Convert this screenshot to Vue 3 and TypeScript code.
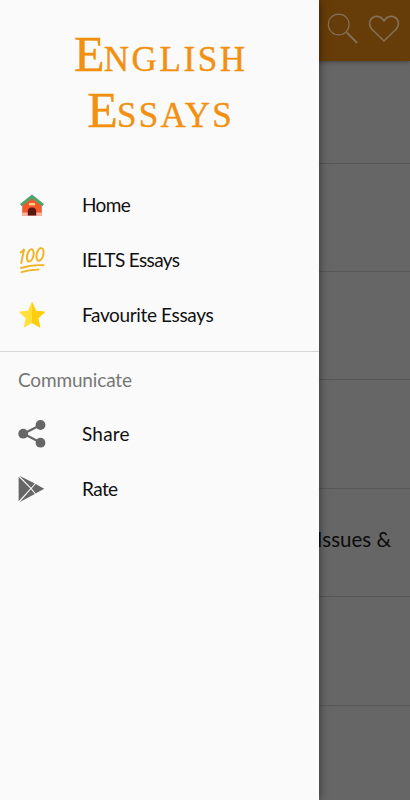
<script setup lang="ts">
interface Entry {
  id: string
  label: string
}

const mainEntries: Entry[] = [
  { id: 'home', label: 'Home' },
  { id: 'ielts', label: 'IELTS Essays' },
  { id: 'favourite', label: 'Favourite Essays' },
]
const communicateEntries: Entry[] = [
  { id: 'share', label: 'Share' },
  { id: 'rate', label: 'Rate' },
]
const topics: string[] = ['', '', '', '', 'Issues &', '', '']
</script>

<template>
  <div class="screen">
    <div class="page">
      <header class="appbar">
        <svg class="search" viewBox="0 0 32 32">
          <circle cx="11.7" cy="11.5" r="10.4" />
          <path class="handle" d="M19.3 19.2L30.2 30" />
        </svg>
        <svg class="heart" viewBox="0 0 32 28">
          <path d="M16 26L3.9 14.2C-.6 9.3 2 1.7 8.5 1.4c3.4-.1 5.8 1.8 7.5 4.5 1.7-2.7 4.1-4.6 7.5-4.5 6.5.3 9.1 7.9 4.6 12.8Z" />
        </svg>
      </header>
      <div v-for="(topic, i) in topics" :key="i" class="topic">{{ topic }}</div>
    </div>

    <aside class="drawer">
      <h1 class="title">
        <span class="wide"><span class="initial">E</span>nglish</span><br />
        <span class="narrow"><span class="initial">E</span>ssays</span>
      </h1>
      <nav class="menu">
        <a v-for="e in mainEntries" :key="e.id" class="entry">
          <svg v-if="e.id === 'home'" class="icon" viewBox="0 0 28 28">
            <path fill="#f15a2b" d="M4.2 12L14 4.5l9.8 7.5v12.5H4.2z" />
            <path fill="#f8b5a3" d="M4.2 21.5h19.6v3H4.2z" />
            <path fill="#5d1712" d="M9.8 24.5v-4.3a4.2 3.8 0 0 1 8.4 0v4.3z" />
            <rect x="11" y="12" width="6" height="2.4" fill="#ffcc80" />
            <path fill="#4fa36b" d="M14 3.6L26 13l-1.6 2.2L14 7.7 3.6 15.2 2 13z" />
          </svg>
          <svg v-else-if="e.id === 'ielts'" class="icon hundred" viewBox="0 0 28 28">
            <path d="M2.8 6.4Q5 5.2 6.2 3L3.2 17" />
            <ellipse cx="12.3" cy="9.4" rx="3.1" ry="6.3" transform="rotate(14 12.3 9.4)" />
            <ellipse cx="22" cy="8.4" rx="3.3" ry="6.5" transform="rotate(14 22 8.4)" />
            <path d="M3 22Q13 18.6 25.5 19.2M3.5 26.2Q11 23.4 20.5 23.6" />
          </svg>
          <svg v-else class="icon" viewBox="0 0 28 28">
            <path fill="#ffdf38" d="M14 .8l4 9 9.3 1-7 6.4 2 9.6L14 22 5.7 26.8l2-9.6-7-6.4 9.3-1z" />
            <path fill="#fdce0c" d="M14 .8l4 9 9.3 1-7 6.4 2 9.6L14 22z" />
          </svg>
          <span :class="['label', e.id]">{{ e.label }}</span>
        </a>
      </nav>
      <section class="communicate">
        <h2 class="subheader">Communicate</h2>
        <a v-for="e in communicateEntries" :key="e.id" class="entry">
          <svg v-if="e.id === 'share'" class="icon grey" viewBox="0 0 28 28">
            <path class="link" d="M22.5 5L5.5 13.7l17 8.8" />
            <circle cx="22.5" cy="5" r="4.9" />
            <circle cx="5.2" cy="13.7" r="4.9" />
            <circle cx="22.5" cy="22.7" r="4.9" />
          </svg>
          <svg v-else class="icon grey" viewBox="0 0 28 28">
            <path d="M.6 1.7L12.3 13.5.6 26.3z" />
            <path d="M1.4.7L16.8 8.4 13.1 12.7z" />
            <path d="M17.6 8.9L26.2 13.8 17.6 18.4 13.8 13.6z" />
            <path d="M13 14.3L16.8 19 1.8 27z" />
          </svg>
          <span :class="['label', e.id]">{{ e.label }}</span>
        </a>
      </section>
    </aside>
  </div>
</template>

<style>
body {
  margin: 0;
  overflow: hidden;
}
</style>

<style scoped>
.screen {
  position: relative;
  width: 410px;
  height: 800px;
  overflow: hidden;
  background: #666;
  font-family: Lato, 'Liberation Sans', sans-serif;
}
.appbar {
  display: flex;
  justify-content: flex-end;
  align-items: flex-start;
  box-sizing: border-box;
  height: 61px;
  padding: 13px 10px 0 0;
  background: #663d08;
  box-shadow: 0 1px 4px rgba(0, 0, 0, 0.35);
}
.appbar svg {
  fill: none;
  stroke: #85705a;
  stroke-width: 1.1;
}
.search {
  width: 32px;
  height: 32px;
  margin-right: 9px;
}
.search .handle {
  stroke-width: 1.9;
}
.heart {
  width: 32px;
  height: 28px;
  margin-top: 2px;
}
.appbar .heart {
  stroke-width: 1.6;
}
.topic {
  display: flex;
  align-items: center;
  justify-content: flex-end;
  box-sizing: border-box;
  height: 108.4px;
  padding: 0 19px 6px 0;
  border-bottom: 1px solid #575757;
  color: #0c0c0c;
  font-size: 20.5px;
}
.appbar + .topic {
  height: 102.6px;
}
.drawer {
  position: absolute;
  top: 0;
  left: 0;
  width: 319px;
  height: 800px;
  background: #fafafa;
  box-shadow: 0 0 9px rgba(0, 0, 0, 0.55);
}
.title {
  margin: 0;
  padding-top: 26px;
  height: 151px;
  color: #f29111;
  font: 400 50px/56px 'Liberation Serif', serif;
  font-variant: small-caps;
  text-align: center;
  -webkit-text-stroke: 0.4px #f29111;
}
.wide {
  letter-spacing: 2.6px;
  margin-right: -2.6px;
}
.narrow {
  letter-spacing: 2.2px;
  margin-right: -2.2px;
}
.initial {
  letter-spacing: -0.8px;
}
.menu {
  height: 174px;
  border-bottom: 1px solid #d6d6d6;
}
.entry {
  display: flex;
  align-items: center;
  height: 55px;
  padding-left: 18px;
  color: #111;
  font-size: 19px;
}
.icon {
  width: 28px;
  height: 28px;
  margin-right: 36px;
}
.label.home {
  letter-spacing: -0.6px;
}
.label.ielts {
  letter-spacing: -0.63px;
}
.label.favourite {
  letter-spacing: -0.36px;
}
.label.share {
  letter-spacing: 0.2px;
}
.label.rate {
  letter-spacing: -0.6px;
}
.hundred {
  fill: none;
  stroke: #f2b322;
  stroke-width: 1.9;
  stroke-linecap: round;
}
.grey {
  fill: #666;
}
.link {
  fill: none;
  stroke: #666;
  stroke-width: 2.2;
}
.subheader {
  margin: 0;
  padding: 0 18px;
  height: 54px;
  color: #767676;
  font-size: 19px;
  font-weight: 400;
  line-height: 56px;
  letter-spacing: -0.15px;
}
</style>
